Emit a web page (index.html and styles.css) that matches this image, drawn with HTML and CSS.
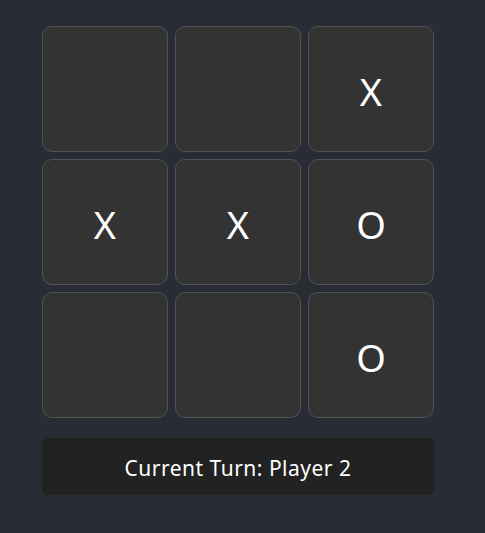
FILE: index.html
```html
<!DOCTYPE html>
<html lang="en">
<head>
<meta charset="utf-8">
<title>Tic Tac Toe</title>
<link rel="stylesheet" href="styles.css">
</head>
<body>
<main class="game">
  <div class="board">
    <div class="cell"></div>
    <div class="cell"></div>
    <div class="cell">X</div>
    <div class="cell">X</div>
    <div class="cell">X</div>
    <div class="cell">O</div>
    <div class="cell"></div>
    <div class="cell"></div>
    <div class="cell">O</div>
  </div>
  <div class="status">Current Turn: Player 2</div>
</main>
</body>
</html>
```

FILE: styles.css
```css
html, body {
  margin: 0;
  padding: 0;
  background: #282c34;
  height: 100%;
}
body {
  font-family: "Noto Sans", "Open Sans", "Liberation Sans", sans-serif;
  color: #ffffff;
}
.game {
  width: 392px;
  padding: 26px 0 0 42px;
  display: flex;
  flex-direction: column;
  gap: 20px;
}
.board {
  display: grid;
  grid-template-columns: repeat(3, 126px);
  grid-template-rows: repeat(3, 126px);
  gap: 7px;
}
.cell {
  box-sizing: border-box;
  background: #333333;
  border: 1px solid #525252;
  border-radius: 10px;
  display: flex;
  align-items: center;
  justify-content: center;
  font-size: 38px;
  padding-top: 4px;
}
.status {
  height: 57px;
  background: #222222;
  border-radius: 6px;
  display: flex;
  align-items: center;
  justify-content: center;
  font-size: 21px;
  letter-spacing: 0.5px;
  padding-top: 2px;
  box-sizing: border-box;
}
```
